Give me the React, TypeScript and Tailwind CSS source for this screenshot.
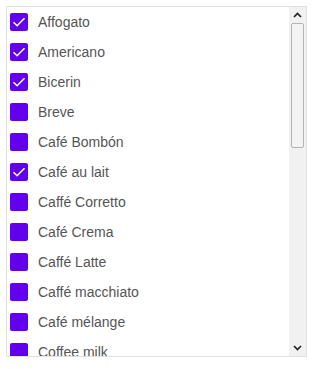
import { useState } from "react";

const coffees = [
  "Affogato",
  "Americano",
  "Bicerin",
  "Breve",
  "Café Bombón",
  "Café au lait",
  "Caffé Corretto",
  "Café Crema",
  "Caffé Latte",
  "Caffé macchiato",
  "Café mélange",
  "Coffee milk",
  "Cafe mocha",
  "Ca phe sua da",
  "Kopi susu",
  "Cappuccino",
  "Cortado",
  "Cuban espresso",
  "Espresso",
  "Eiskaffee",
  "The Flat White",
  "Frappuccino",
  "Galao",
  "Greek frappé coffee",
  "Iced Coffee",
  "Indian filter coffee",
  "Instant coffee",
  "Irish coffee",
  "Liqueur coffee",
];

function CheckBox({ checked }: { checked: boolean }) {
  return (
    <span className="flex h-[18px] w-[18px] shrink-0 items-center justify-center rounded-[2px] bg-[#6200ee]">
      {checked && (
        <svg viewBox="0 0 18 18" className="h-[18px] w-[18px]" fill="none">
          <path d="M3.5 9.2l3.6 3.5 7.4-7.4" stroke="#fff" strokeWidth="1.6" />
        </svg>
      )}
    </span>
  );
}

function Arrow({ up }: { up: boolean }) {
  return (
    <svg viewBox="0 0 9 6" className="h-[6px] w-[9px]" fill="none">
      <path
        d={up ? "M1 5L4.5 1.5 8 5" : "M1 1l3.5 3.5L8 1"}
        stroke="#222"
        strokeWidth="1.7"
      />
    </svg>
  );
}

export default function App() {
  const [selected, setSelected] = useState<string[]>([
    "Affogato",
    "Americano",
    "Bicerin",
    "Café au lait",
  ]);

  const toggle = (name: string) =>
    setSelected((s) => (s.includes(name) ? s.filter((n) => n !== name) : [...s, name]));

  return (
    <div className="p-[6px]" style={{ fontFamily: '"Liberation Sans", Arial, sans-serif' }}>
      <div className="flex h-[351px] w-[301px] border border-[#e0e0e0] bg-white">
        {/* list */}
        <div className="min-w-0 flex-1 overflow-hidden">
          {coffees.map((name) => (
            <label
              key={name}
              onClick={() => toggle(name)}
              className="flex h-[30px] cursor-pointer items-center gap-[10px] pl-[3px] text-[14px] text-[#555]"
            >
              <CheckBox checked={selected.includes(name)} />
              <span className="whitespace-nowrap">{name}</span>
            </label>
          ))}
        </div>

        {/* scrollbar */}
        <div className="flex w-[17px] shrink-0 flex-col bg-[#f1f1f1]">
          <div className="flex h-[16px] items-center justify-center">
            <Arrow up />
          </div>
          <div className="flex-1 px-[2px]">
            <div className="h-[125px] rounded-[2px] border border-[#b4b4b4] bg-[#f3f3f3]" />
          </div>
          <div className="flex h-[16px] items-center justify-center">
            <Arrow up={false} />
          </div>
        </div>
      </div>
    </div>
  );
}
